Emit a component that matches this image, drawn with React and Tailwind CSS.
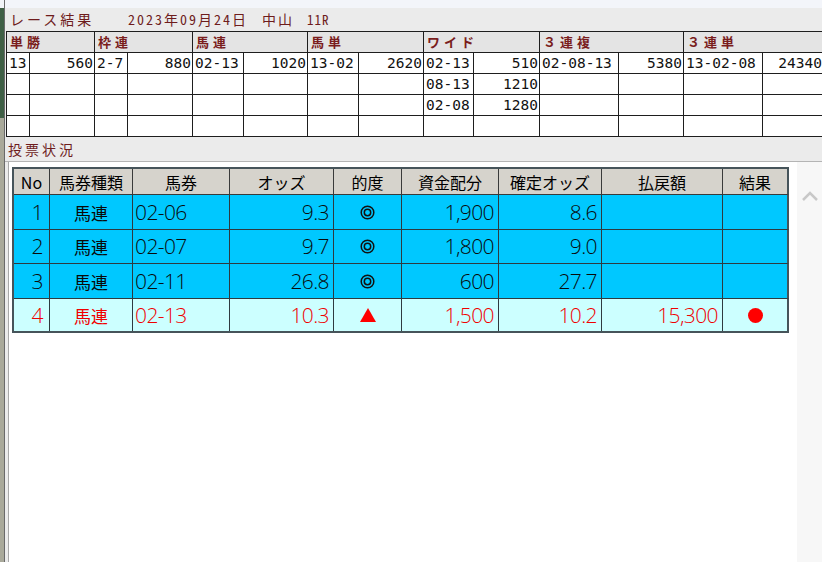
import React from "react";

const topCols = [23, 65, 33, 65, 51, 64, 51, 65, 50, 66, 79, 65, 79, 61];
const groups = [
  ["単勝", 88],
  ["枠連", 98],
  ["馬連", 115],
  ["馬単", 116],
  ["ワイド", 116],
  ["３連複", 144],
  ["３連単", 140],
];
const topRows = [
  ["13", "560", "2-7", "880", "02-13", "1020", "13-02", "2620", "02-13", "510", "02-08-13", "5380", "13-02-08", "24340"],
  ["", "", "", "", "", "", "", "", "08-13", "1210", "", "", "", ""],
  ["", "", "", "", "", "", "", "", "02-08", "1280", "", "", "", ""],
  ["", "", "", "", "", "", "", "", "", "", "", "", "", ""],
];

const botCols = [37, 83, 97, 104, 68, 97, 103, 121, 66];
const botHead = ["No", "馬券種類", "馬券", "オッズ", "的度", "資金配分", "確定オッズ", "払戻額", "結果"];
const botRows = [
  { h: 35, hit: false, d: ["1", "馬連", "02-06", "9.3", "o", "1,900", "8.6", "", ""] },
  { h: 34, hit: false, d: ["2", "馬連", "02-07", "9.7", "o", "1,800", "9.0", "", ""] },
  { h: 35, hit: false, d: ["3", "馬連", "02-11", "26.8", "o", "600", "27.7", "", ""] },
  { h: 34, hit: true, d: ["4", "馬連", "02-13", "10.3", "t", "1,500", "10.2", "15,300", "c"] },
];

const MONO = { fontFamily: '"Noto Sans Mono CJK JP", "Liberation Mono", monospace' };
const CELLMONO = { fontFamily: '"DejaVu Sans Mono", "Liberation Mono", monospace' };

function Mark({ v }) {
  if (v === "o")
    return (
      <svg width="15" height="15" viewBox="0 0 15 15">
        <circle cx="7.5" cy="7.5" r="6.3" fill="none" stroke="#111" strokeWidth="1.5" />
        <circle cx="7.5" cy="7.5" r="3.2" fill="none" stroke="#111" strokeWidth="1.5" />
      </svg>
    );
  if (v === "t")
    return (
      <svg width="16" height="14" viewBox="0 0 16 14">
        <polygon points="8,0 16,14 0,14" fill="#ff0000" />
      </svg>
    );
  if (v === "c") return <div className="w-[15px] h-[15px] rounded-full bg-[#ff0000]" />;
  return null;
}

export default function App() {
  return (
    <div
      className="w-[822px] h-[562px] overflow-hidden flex bg-[#ebebeb]"
      style={{ fontFamily: '"Noto Sans CJK JP", "Liberation Sans", sans-serif' }}
    >
      {/* left window edge */}
      <div className="w-[5px] shrink-0 flex flex-col border-r border-[#6a6a6a]">
        <div className="h-[8px] bg-[#f2f4f8]" />
        <div className="h-[110px] bg-[#3f5f45]" />
        <div className="flex-1 bg-[#a9a99a]" />
      </div>

      <div className="flex-1 flex flex-col min-w-0">
        <div className="h-[8px] bg-[#f3f5fa] shrink-0" />

        {/* title */}
        <div className="h-[23px] flex items-center pl-[5px] text-[#6e1c1c] shrink-0">
          <span className="w-[118px] text-[14px] tracking-[3px]">レース結果</span>
          <span className="w-[134px] text-[14px] tracking-[2px]" style={MONO}>2023年09月24日</span>
          <span className="w-[45px] text-[14px] tracking-[2px]">中山</span>
          <span className="text-[13px] tracking-[1px]" style={MONO}>11R</span>
        </div>

        {/* top result table */}
        <div className="ml-[1px] border-l border-t border-[#1e1e1e] w-[900px] shrink-0">
          <div className="flex h-[21px] bg-[#e4e4e4]">
            {groups.map(([g, w]) => (
              <div
                key={g}
                style={{ width: w }}
                className="shrink-0 border-r border-b border-[#1e1e1e] pl-[3px] flex items-center text-[13px] tracking-[4px] text-[#7a1d1d] font-bold"
              >
                {g}
              </div>
            ))}
          </div>
          {topRows.map((r, ri) => (
            <div key={ri} className="flex h-[21px] bg-white">
              {r.map((c, ci) => (
                <div
                  key={ci}
                  style={{ width: topCols[ci], ...CELLMONO }}
                  className={
                    "shrink-0 border-r border-b border-[#1e1e1e] flex items-center text-[14.5px] leading-none text-[#111] " +
                    (ci % 2 === 0 ? "justify-start pl-[2px]" : "justify-end pr-[1px]")
                  }
                >
                  {c}
                </div>
              ))}
            </div>
          ))}
        </div>

        {/* label */}
        <div className="h-[24px] flex items-center pl-[3px] text-[14px] tracking-[3px] text-[#6e1c1c] shrink-0">
          投票状況
        </div>

        {/* lower panel */}
        <div className="flex-1 flex min-h-0 border-t border-[#b4b4b4]">
          <div className="flex-1 ml-[3px] border-l border-[#a8a8a8] bg-white pl-[3px] pt-[5px]">
            <div className="border-l-2 border-t-2 border-[#46545a] w-fit">
              <div className="flex h-[26px] bg-[#d6d3cc]">
                {botHead.map((h, i) => (
                  <div
                    key={h}
                    style={{ width: botCols[i] - (i === 0 ? 1 : 0) }}
                    className={
                      "shrink-0 border-b border-r border-[#3a3a3a] flex items-center justify-center text-[16px] leading-none text-black " +
                      (i === botHead.length - 1 ? "border-r-2 border-r-[#46545a]" : "")
                    }
                  >
                    {h}
                  </div>
                ))}
              </div>
              {botRows.map((row, ri) => (
                <div
                  key={ri}
                  style={{ height: row.h }}
                  className={
                    "flex " +
                    (row.hit ? "bg-[#ccffff] text-[#f00000]" : "bg-[#00c8ff] text-[#0a0a0a]") +
                    (ri === botRows.length - 1 ? " border-b-2 border-[#46545a]" : "")
                  }
                >
                  {row.d.map((c, ci) => {
                    const align =
                      ci === 1 || ci === 4 || ci === 8
                        ? "justify-center"
                        : ci === 2
                        ? "justify-start pl-[2px]"
                        : ci === 0
                        ? "justify-end pr-[6px]"
                        : "justify-end pr-[4px]";
                    const isKanji = ci === 1;
                    return (
                      <div
                        key={ci}
                        style={{
                          width: botCols[ci] - (ci === 0 ? 1 : 0),
                          fontFamily: isKanji ? '"Noto Sans CJK JP", sans-serif' : '"Open Sans", "Liberation Sans", sans-serif',
                        }}
                        className={
                          "shrink-0 border-r flex items-center leading-none " +
                          (ri === botRows.length - 1 ? "" : "border-b ") +
                          "border-[#2e3a40] " +
                          align +
                          (isKanji ? " text-[17px]" : " text-[21px] font-light tracking-[-0.6px]") +
                          (ci === botCols.length - 1 ? " border-r-2 border-r-[#46545a]" : "")
                        }
                      >
                        {ci === 4 || ci === 8 ? <Mark v={c} /> : c}
                      </div>
                    );
                  })}
                </div>
              ))}
            </div>
          </div>
          {/* scrollbar */}
          <div className="w-[25px] shrink-0 bg-[#f7f7f7] flex justify-center pt-[29px]">
            <svg width="18" height="11" viewBox="0 0 18 11">
              <polyline points="2,9 9,2 16,9" fill="none" stroke="#c8c8c8" strokeWidth="2.5" />
            </svg>
          </div>
        </div>
      </div>
    </div>
  );
}
